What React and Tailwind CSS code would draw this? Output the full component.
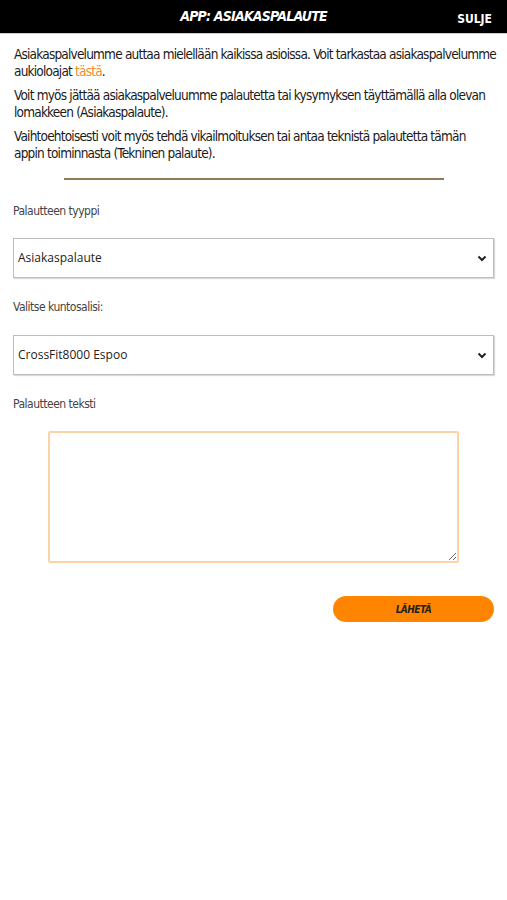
import React from "react";

function Chevron() {
  return (
    <svg width="10" height="7" viewBox="0 0 10 7" className="shrink-0">
      <path d="M1.5 1.5 L5 5 L8.5 1.5" fill="none" stroke="#222" strokeWidth="2" />
    </svg>
  );
}

export default function App() {
  const cond = "font-['DejaVu_Sans_Condensed','DejaVu_Sans',sans-serif] font-stretch-condensed";
  return (
    <div className="w-[507px] h-[900px] bg-white">
      <div className="h-[34px] bg-black border-b border-[#d8d0a0] flex items-center relative">
        <div className={`w-full text-center text-white font-bold italic text-[14px] tracking-[-0.8px] ${cond}`}>
          APP: ASIAKASPALAUTE
        </div>
        <div className={`absolute right-[15px] top-[10px] text-white font-bold text-[12px] ${cond}`}>SULJE</div>
      </div>
      <div className={`px-[14px] pt-[12px] text-[13.5px] tracking-[-0.8px] leading-[17px] text-[#1a1a1a] ${cond}`}>
        <p className="mb-[7px] whitespace-nowrap">
          Asiakaspalvelumme auttaa mielellään kaikissa asioissa. Voit tarkastaa asiakaspalvelumme
          <br />
          aukioloajat <span className="text-[#f28c2c]">tästä</span>.
        </p>
        <p className="mb-[7px] whitespace-nowrap">
          Voit myös jättää asiakaspalveluumme palautetta tai kysymyksen täyttämällä alla olevan
          <br />
          lomakkeen (Asiakaspalaute).
        </p>
        <p className="whitespace-nowrap">
          Vaihtoehtoisesti voit myös tehdä vikailmoituksen tai antaa teknistä palautetta tämän
          <br />
          appin toiminnasta (Tekninen palaute).
        </p>
      </div>
      <div className="flex justify-center mt-[16px]">
        <div className="w-[380px] h-[2px] bg-[#8f7a55]"></div>
      </div>
      <div className="px-[13px]">
        <div className={`mt-[23px] leading-[16px] text-[12px] tracking-[-0.5px] text-[#444] ${cond}`}>Palautteen tyyppi</div>
        <div className="mt-[19px] h-[40px] border border-[#bdbdbd] shadow-[1px_1px_1px_rgba(0,0,0,0.15)] flex items-center justify-between pl-[4px] pr-[6px] font-['Open_Sans',sans-serif] text-[12px] text-[#222]">
          <span>Asiakaspalaute</span>
          <Chevron />
        </div>
        <div className={`mt-[21px] leading-[16px] text-[12px] tracking-[-0.5px] text-[#444] ${cond}`}>Valitse kuntosalisi:</div>
        <div className="mt-[20px] h-[40px] border border-[#bdbdbd] shadow-[1px_1px_1px_rgba(0,0,0,0.15)] flex items-center justify-between pl-[4px] pr-[6px] font-['Open_Sans',sans-serif] text-[12px] text-[#222]">
          <span>CrossFit8000 Espoo</span>
          <Chevron />
        </div>
        <div className={`mt-[21px] leading-[16px] text-[12px] tracking-[-0.5px] text-[#444] ${cond}`}>Palautteen teksti</div>
        <div className="flex justify-center mt-[19px]">
          <textarea className="block w-[411px] h-[132px] border-2 border-[#fbd3a6] rounded-[2px] outline-none resize-y"></textarea>
        </div>
        <div className="flex justify-end mt-[33px]">
          <button className={`w-[161px] h-[26px] rounded-full bg-[#ff8500] text-[#222] font-bold italic text-[10px] tracking-[-0.5px] ${cond}`}>
            LÄHETÄ
          </button>
        </div>
      </div>
    </div>
  );
}
